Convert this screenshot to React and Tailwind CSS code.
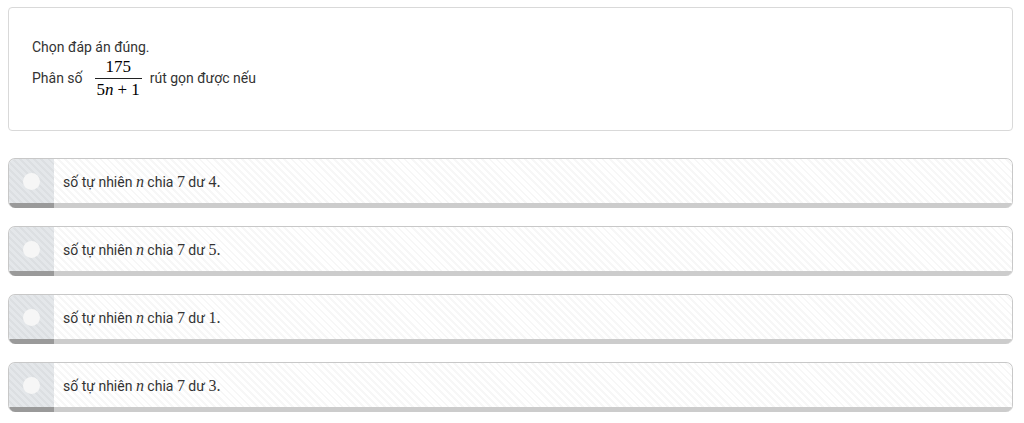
import React from 'react';

const stripes =
  'bg-[repeating-linear-gradient(45deg,#ffffff_0px,#ffffff_3px,#f7f7f7_3px,#f7f7f7_5px)]';

const options = ['4', '5', '1', '3'];

const MathN = () => (
  <span className="font-['Liberation_Serif',serif] italic text-[16px]">n</span>
);

const Option = ({ rest }) => (
  <div className="flex h-[50px] rounded-[7px] border border-b-0 border-[#c8c8c8] overflow-hidden">
    <div className="w-[45px] flex items-center justify-center border-b-[5px] border-[#9a9a9a] bg-[repeating-linear-gradient(45deg,#e4e7ea_0px,#e4e7ea_3px,#dcdfe2_3px,#dcdfe2_5px)]">
      <div className="w-[17px] h-[17px] rounded-full bg-[#f6f6f6]"></div>
    </div>
    <div className={`flex-1 flex items-center pl-[9px] pt-[1px] border-b-[5px] border-[#cccccc] ${stripes}`}>
      <span className="text-[14px] text-[#333] font-['Roboto',sans-serif]">
        số tự nhiên <MathN /> chia{' '}
        <span className="font-['Liberation_Serif',serif] text-[16px]">7</span> dư{' '}
        <span className="font-['Liberation_Serif',serif] text-[16px]">{rest}.</span>
      </span>
    </div>
  </div>
);

const App = () => {
  return (
    <div className="min-h-screen bg-white pl-2 pr-[11px] pt-[7px] font-['Roboto',sans-serif]">
      <div className="h-[124px] rounded-[4px] border border-[#d9d9d9] pl-[23px] pt-[30px] text-[14px] text-[#333]">
        <p className="leading-[18px]">Chọn đáp án đúng.</p>
        <div className="flex items-center mt-[1px]">
          <span>Phân số</span>
          <span className="inline-flex flex-col items-center ml-[12px] mr-[8px] font-['Liberation_Serif',serif] text-[17px] text-black">
            <span className="leading-[20px] px-[3px]">175</span>
            <span className="w-full h-px bg-[#222] mt-[1px]"></span>
            <span className="leading-[21px] px-[2px]">
              5<span className="italic">n</span>
              <span className="mx-[4px]">+</span>1
            </span>
          </span>
          <span>rút gọn được nếu</span>
        </div>
      </div>
      <div className="mt-[27px] flex flex-col gap-[18px]">
        {options.map((r) => (
          <Option key={r} rest={r} />
        ))}
      </div>
    </div>
  );
};

export default App;
